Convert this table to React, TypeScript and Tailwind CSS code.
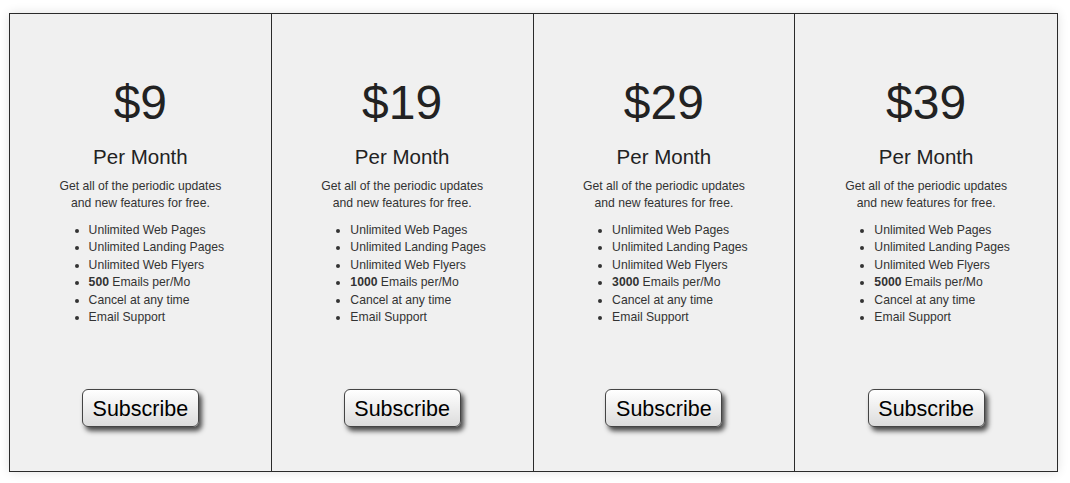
import React from 'react';

export default function App() {
  // Pricing plans
  const plans = [
    { price: '$9', emails: '500' },
    { price: '$19', emails: '1000' },
    { price: '$29', emails: '3000' },
    { price: '$39', emails: '5000' },
  ];

  return (
    <div className="min-h-screen bg-white pt-[13px] pl-[9px]" style={{ fontFamily: '"Liberation Sans", Arial, sans-serif' }}>
      <div className="w-[1049px] h-[459px] grid grid-cols-4 divide-x divide-[#2a2a2a] border border-[#2a2a2a] bg-[#f0f0f0] shadow-[0_0_10px_rgba(0,0,0,0.12)]">
        {plans.map((plan) => (
          <div key={plan.price} className="flex flex-col items-center text-[#222]">
            <div className="mt-[65px] text-[48px] leading-none">{plan.price}</div>
            <div className="mt-[20px] text-[20.5px] leading-none">Per Month</div>
            <p className="mt-[10px] text-[12.2px] leading-[17px] text-center text-[#333]">
              Get all of the periodic updates
              <br />
              and new features for free.
            </p>
            <ul className="mt-[10px] list-disc pl-[32px] text-[12.2px] leading-[17.5px] text-[#333] text-left">
              <li>Unlimited Web Pages</li>
              <li>Unlimited Landing Pages</li>
              <li>Unlimited Web Flyers</li>
              <li>
                <span className="font-bold">{plan.emails}</span> Emails per/Mo
              </li>
              <li>Cancel at any time</li>
              <li>Email Support</li>
            </ul>
            <button className="mt-auto mb-[44px] w-[117px] h-[38px] pt-[3px] rounded-[6px] border border-[#444] bg-gradient-to-b from-white to-[#dcdcdc] text-[21.5px] text-black leading-none shadow-[3px_4px_5px_rgba(0,0,0,0.7)]">
              Subscribe
            </button>
          </div>
        ))}
      </div>
    </div>
  );
}
